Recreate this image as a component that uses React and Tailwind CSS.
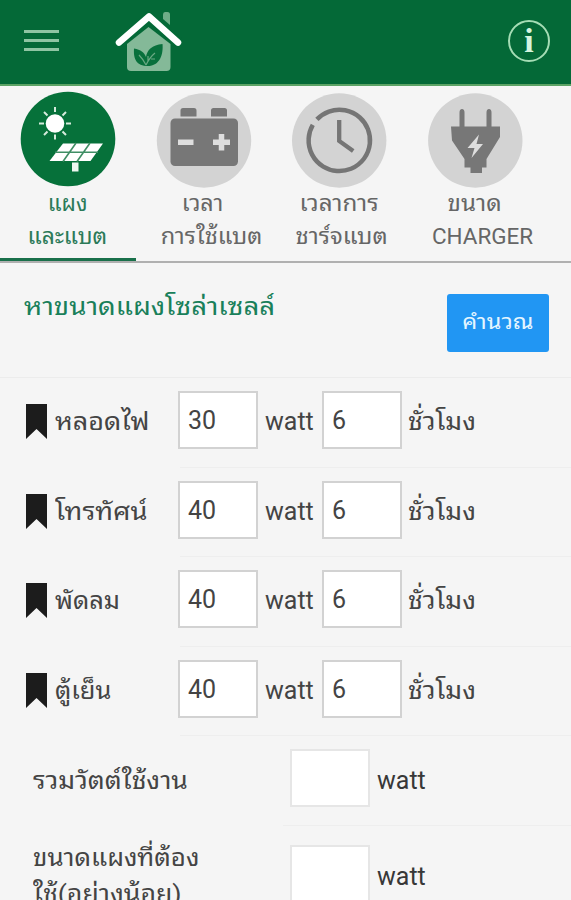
import React from "react";

const appliances = [
  { name: "หลอดไฟ", watt: "30", hours: "6", stretch: "scale-x-[1.08]" },
  { name: "โทรทัศน์", watt: "40", hours: "6", stretch: "scale-x-[1.09]" },
  { name: "พัดลม", watt: "40", hours: "6", stretch: "scale-x-[1.02]" },
  { name: "ตู้เย็น", watt: "40", hours: "6", stretch: "scale-x-[1.02]" },
];

function HouseLogo() {
  return (
    <svg width="70" height="64" viewBox="0 0 70 64" className="ml-[56px] shrink-0">
      <path d="M12 35L33.500 18L55.500 35v23q0 4-4 4H16q-4 0-4-4z" fill="#84b998" />
      <path d="M4 33L34 7L63.500 33" fill="none" stroke="#046937" strokeWidth="11" strokeLinejoin="round" />
      <path d="M50 3h2.500q2.500 0 2.500 2.500v10.500l-7-6v-4.500q0-2.500 2-2.500z" fill="#6fae88" />
      <path d="M4 33.500L34 7.500L63 33.500" fill="none" stroke="#fff" strokeWidth="6.500" strokeLinecap="round" strokeLinejoin="round" />
      <path d="M31 57C20 56 18.500 48 19 39.500C26 41 29 43 31 48C32 41 37 36 47.500 35C48.500 45 45 58 31 57z" fill="#08703c" />
      <path d="M31 56Q28 50 24 46M31 56Q35 48 40 44M33 52v-5M36 50h4" fill="none" stroke="#6aa983" strokeWidth="1.200" />
    </svg>
  );
}

function SolarIcon() {
  return (
    <svg width="96" height="96" viewBox="0 0 96 96" className="shrink-0">
      <circle cx="48" cy="48" r="47.300" fill="#06713a" />
      <circle cx="35" cy="32.500" r="9.300" fill="#fff" />
      <path d="M35 16v5M35 43.500v5M19 32.500h5M46 32.500h5M24 21l3.500 3.500M42.500 40.500l3.500 3.500M46 21L42.500 24.500M27.500 40.500L24 44" stroke="#d5ebdc" strokeWidth="2" fill="none" />
      <path d="M43 52.500H83L70.500 70H29.500z" fill="#fff" />
      <path d="M35 61.200H78M56 52L43 70.500M70 52L57 70.500" stroke="#3f8e64" strokeWidth="1.600" />
      <path d="M52 71.500h6.500v9H52z" fill="#eef7f0" />
    </svg>
  );
}

function BatteryIcon() {
  return (
    <svg width="96" height="96" viewBox="0 0 96 96" className="shrink-0 overflow-visible">
      <circle cx="48" cy="49.500" r="47.200" fill="#d3d3d3" />
      <path d="M24.500 25.500v-6q0-2.500 2.500-2.500h11q2.500 0 2.500 2.500v6zM55 25.500v-6q0-2.500 2.500-2.500h11q2.500 0 2.500 2.500v6z" fill="#777" />
      <rect x="14.500" y="27.500" width="67.500" height="47.500" rx="4.500" fill="#777" />
      <path d="M22 51.300h15.500M57 51.300h17M65.500 43v16.500" stroke="#dedede" strokeWidth="5.500" />
    </svg>
  );
}

function ClockIcon() {
  return (
    <svg width="96" height="96" viewBox="0 0 96 96" className="shrink-0 overflow-visible">
      <circle cx="48.200" cy="49.500" r="47.200" fill="#d3d3d3" />
      <path d="M25.900 28.400A30.700 30.700 0 1 1 21.800 33.900" fill="none" stroke="#757575" strokeWidth="4.500" />
      <path d="M48.200 29v21l14 10" fill="none" stroke="#757575" strokeWidth="4.300" />
    </svg>
  );
}

function PlugIcon() {
  return (
    <svg width="96" height="96" viewBox="0 0 96 96" className="shrink-0 overflow-visible">
      <circle cx="48.300" cy="49.500" r="47.200" fill="#d3d3d3" />
      <path d="M32.500 36V21.500q0-3.500 2.500-3.500t2.500 3.500V36zM59.500 36V21.500q0-3.500 2.500-3.500t2.500 3.500V36z" fill="#777" />
      <path d="M24 35.500H73V46L59.500 68v8.500h-4.500v5.500H43.500v-5.500H37.500v-8.500L25 49.500z" fill="#777" />
      <path d="M52 43.500L40.500 57h7l-3 10L56 53h-6.500z" fill="#dedede" />
    </svg>
  );
}

const tabs = [
  { Icon: SolarIcon, first: "แผง", second: "และแบต", active: true, one: "-ml-[1px] scale-x-[1.01]", two: "-ml-[1px] scale-x-[1.04]" },
  { Icon: BatteryIcon, first: "เวลา", second: "การใช้แบต", one: "-ml-[1px] scale-x-[1.06]", two: "ml-[15px] scale-x-[1.07]" },
  { Icon: ClockIcon, first: "เวลาการ", second: "ชาร์จแบต", one: "-ml-[1px] scale-x-[1.1]", two: "ml-[4px] scale-x-[1.08]" },
  { Icon: PlugIcon, first: "ขนาด", second: "CHARGER", one: "-ml-[1px] scale-x-[1.1]", two: "ml-[16px] scale-x-[1.02]" },
];

function NumberBox({ value, pale }) {
  return (
    <div className={"flex h-[58px] w-[80px] shrink-0 items-center border-2 bg-white pl-[8px] pt-[2px] text-[25px] text-[#444] " + (pale ? "border-[#e6e6e6]" : "border-[#d2d2d2]")}>
      {value}
    </div>
  );
}

export default function App() {
  return (
    <div className="flex h-[900px] w-[571px] flex-col overflow-hidden whitespace-nowrap bg-[#f5f5f5] font-[Roboto,'Noto_Sans_Thai_Looped','Noto_Looped_Thai','Droid_Sans_Thai',Loma,Garuda,Waree,'Noto_Sans',sans-serif] text-[#444]">
      <header className="flex h-[86px] shrink-0 items-start border-b-2 border-[#5ca365] bg-[#046937] pl-[24px] pt-[9px]">
        <div className="mt-[21px] flex w-[35px] shrink-0 flex-col gap-[6px]">
          <div className="h-[3px] bg-[#8fc5a3]" />
          <div className="h-[3px] bg-[#8fc5a3]" />
          <div className="h-[3px] bg-[#8fc5a3]" />
        </div>
        <HouseLogo />
        <div className="ml-auto mr-[21px] mt-[11px] flex size-[42px] items-center justify-center rounded-full border-[2.500px] border-[#a5ddb5] font-['Liberation_Serif',serif] text-[34px] font-bold leading-none text-[#d5f5df]">
          i
        </div>
      </header>

      <nav className="flex h-[177px] shrink-0 border-b-2 border-[#b0b0b0]">
        {tabs.map(({ Icon, first, second, active, one, two }) => (
          <div
            key={second}
            className={"flex h-[175px] w-[135.700px] shrink-0 flex-col items-center pt-[5px] text-[22px] leading-[33px] " + (active ? "border-b-[3px] border-[#19704a] text-[#2b7a58]" : "text-[#666]")}
          >
            <Icon />
            <span className={one}>{first}</span>
            <span className={two}>{second}</span>
          </div>
        ))}
      </nav>

      <section className="flex h-[115px] shrink-0 items-start justify-between border-b border-[#ececec] pl-[24px] pr-[22px] pt-[31px]">
        <h1 className="-mt-[2px] origin-left scale-x-[1.105] text-[25px] leading-[30px] text-[#19805a]">หาขนาดแผงโซล่าเซลล์</h1>
        <button className="h-[58px] w-[102px] rounded-[3px] bg-[#2196f3] text-[21px] text-[#e4f5ff]">
          <span className="inline-block scale-x-[1.12]">คำนวณ</span>
        </button>
      </section>

      {appliances.map((item) => (
        <div key={item.name} className="flex h-[89.600px] shrink-0 flex-col justify-between">
          <div className="flex items-start pl-[26px] pt-[13px]">
            <svg width="21" height="35" viewBox="0 0 21 35" className="mt-[13px] shrink-0">
              <path d="M0 0h21v35l-10.500-10L0 35z" fill="#1c1c1c" />
            </svg>
            <span className={"ml-[8px] mr-[1px] mt-[13px] w-[122px] shrink-0 origin-left text-[25px] leading-[36px] " + item.stretch}>{item.name}</span>
            <NumberBox value={item.watt} />
            <span className="ml-[7px] mt-[13px] w-[57px] shrink-0 text-[25px] leading-[36px]">watt</span>
            <NumberBox value={item.hours} />
            <span className="ml-[6px] mt-[13px] origin-left scale-x-[1.06] text-[25px] leading-[36px]">ชั่วโมง</span>
          </div>
          <div className="ml-[180px] h-px bg-[#eeeeee]" />
        </div>
      ))}

      <div className="flex h-[90px] shrink-0 flex-col justify-between">
        <div className="flex items-start pl-[33px] pt-[13px]">
          <span className="mt-[14px] w-[257px] shrink-0 origin-left scale-x-[1.105] text-[24px] leading-[36px]">รวมวัตต์ใช้งาน</span>
          <NumberBox value="" pale />
          <span className="ml-[7px] mt-[14px] text-[25px] leading-[36px] text-[#383838]">watt</span>
        </div>
        <div className="ml-[283px] h-px bg-[#eeeeee]" />
      </div>

      <div className="flex h-[96px] shrink-0 items-start pl-[33px] pt-[19px]">
        <div className="-mt-[5px] flex w-[257px] shrink-0 flex-col items-start text-[24px] leading-[36px]">
          <span className="origin-left scale-x-[1.08]">ขนาดแผงที่ต้อง</span>
          <span className="origin-left scale-x-[1.11]">ใช้(อย่างน้อย)</span>
        </div>
        <NumberBox value="" pale />
        <span className="ml-[7px] mt-[14px] text-[25px] leading-[36px] text-[#383838]">watt</span>
      </div>
    </div>
  );
}
